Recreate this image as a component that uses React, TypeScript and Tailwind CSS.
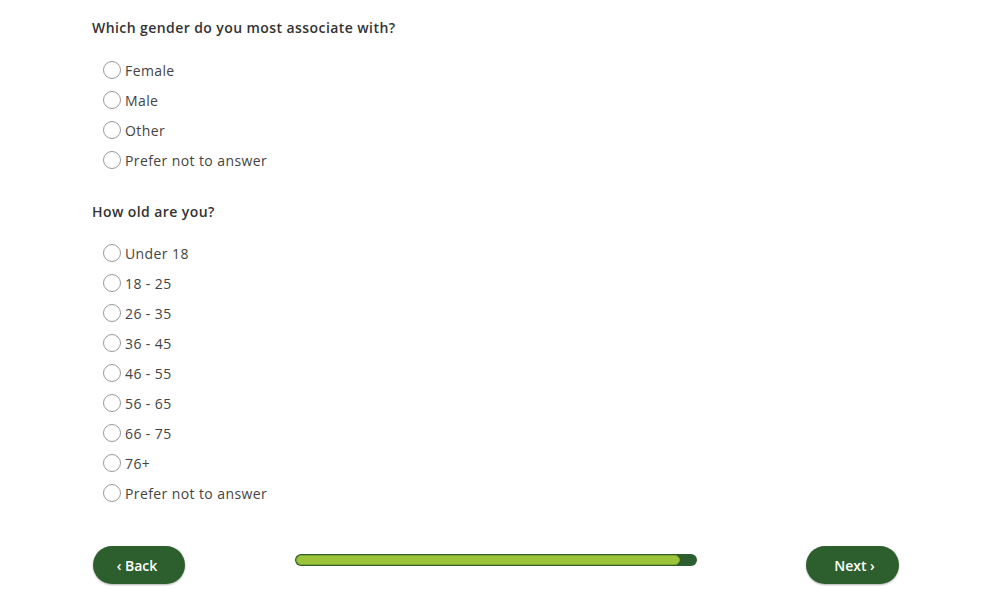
const genders = ['Female', 'Male', 'Other', 'Prefer not to answer'];
const ages = ['Under 18', '18 - 25', '26 - 35', '36 - 45', '46 - 55', '56 - 65', '66 - 75', '76+', 'Prefer not to answer'];

function Option({ label }: { label: string }) {
  return (
    <label className="flex h-[30px] items-center gap-[4px] pl-[11px]">
      <span className="h-[18px] w-[18px] rounded-full border border-[#9a9a9a] bg-white" />
      <span className="text-[14px] text-[#444] tracking-[0.4px]">{label}</span>
    </label>
  );
}

function Heading({ children }: { children: string }) {
  return <h2 className="text-[14px] font-semibold leading-[18px] text-[#333] tracking-[0.42px]">{children}</h2>;
}

export default function App() {
  return (
    <div className="h-[600px] w-[1000px] bg-white font-['Open_Sans',sans-serif]">
      <div className="w-[899px] pl-[92px] pt-[19px]">
        <Heading>Which gender do you most associate with?</Heading>
        <div className="mt-[18px] flex flex-col">
          {genders.map((o) => (
            <Option key={o} label={o} />
          ))}
        </div>
        <div className="mt-[28px]">
          <Heading>How old are you?</Heading>
          <div className="mt-[17px] flex flex-col">
            {ages.map((o) => (
              <Option key={o} label={o} />
            ))}
          </div>
        </div>

        {/* Footer nav */}
        <div className="mt-[38px] flex items-start justify-between pl-px">
          <button className="flex h-[38px] w-[92px] items-center justify-center rounded-full bg-[#2c5f2d] pr-[4px] text-[14px] font-semibold text-white shadow-[0_1px_2px_rgba(0,0,0,0.3)]">
            ‹ Back
          </button>
          <div className="mt-[8px] h-[12px] w-[402px] rounded-full bg-[#2c5f2d] p-[1px]">
            <div className="h-full w-[96%] rounded-full border border-[#7fa52e] bg-[#9cc33c]" />
          </div>
          <button className="flex h-[38px] w-[93px] items-center justify-center rounded-full bg-[#2c5f2d] pl-[4px] text-[14px] font-semibold text-white shadow-[0_1px_2px_rgba(0,0,0,0.3)]">
            Next ›
          </button>
        </div>
      </div>
    </div>
  );
}
